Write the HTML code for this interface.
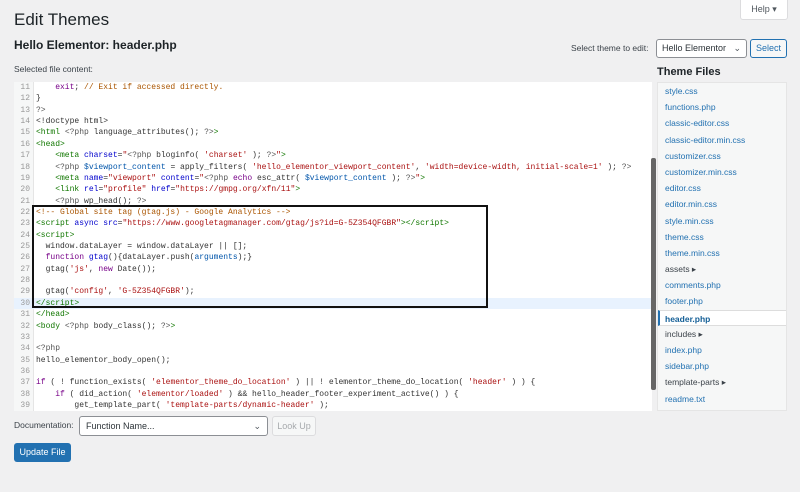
<!DOCTYPE html>
<html><head><meta charset="utf-8"><style>
*{margin:0;padding:0;box-sizing:border-box}
body{width:800px;height:492px;background:#f0f0f1;font-family:"Liberation Sans",sans-serif;color:#1d2327;position:relative;overflow:hidden}
.abs{position:absolute}
h1{position:absolute;left:14px;top:10px;font-size:17px;font-weight:400;color:#1d2327}
h2{position:absolute;left:14px;top:38px;font-size:12px;font-weight:700}
.sel{left:14px;top:64px;font-size:8.5px;color:#3c434a}
.help{left:740px;top:-2px;width:48px;height:22px;background:#fff;border:1px solid #dcdcde;border-radius:0 0 3px 3px;font-size:9px;color:#50575e;text-align:center;line-height:20px}
.editor{left:14px;top:82px;width:638px;height:329px;background:#fff;overflow:hidden}
.gut{position:absolute;left:0;top:0;width:20px;height:100%;background:#f6f7f7;border-right:1px solid #e5e5e5}
.code{position:absolute;left:0;top:0;font-family:"Liberation Mono",monospace;font-size:8px;line-height:11.36px;white-space:pre;color:#333}
.ln{display:inline-block;width:20px;text-align:right;padding-right:4px;color:#999;margin-right:2px}
.t{color:#170}.a{color:#00c}.s{color:#a11}.k{color:#708}.c{color:#a50}.v{color:#05a}.m{color:#555}
.hl{background:#e8f2fe;display:block;width:638px}
.box{left:32px;top:205px;width:456px;height:103px;border:2px solid #111}
.sb{left:651px;top:158px;width:5px;height:232px;background:#666;border-radius:2px}
.files{left:657px;top:82px;width:130px;height:329px;background:#f6f7f7;border:1px solid #e5e5e5;font-size:8.5px}
.files div{height:16.2px;line-height:16.2px;padding-left:7px;color:#2271b1}
.files div.d{color:#3c434a}
.files div.cur{background:#fff;border-left:2px solid #2271b1;border-top:1px solid #ddd;border-bottom:1px solid #ddd;font-weight:700;color:#135e96;padding-left:5px;width:128px}
</style></head><body>
<h1>Edit Themes</h1>
<h2>Hello Elementor: header.php</h2>
<div class="abs sel">Selected file content:</div>
<div class="abs help">Help ▾</div>
<div class="abs" style="left:571px;top:43px;font-size:8.5px;color:#3c434a">Select theme to edit:</div>
<div class="abs" style="left:656px;top:39px;width:91px;height:19px;background:#fff;border:1px solid #8c8f94;border-radius:3px;font-size:9px;line-height:17px;padding-left:5px;color:#2c3338">Hello Elementor <span style="position:absolute;right:5px;color:#50575e">⌄</span></div>
<div class="abs" style="left:750px;top:39px;width:37px;height:19px;border:1px solid #2271b1;border-radius:3px;background:#f6f7f7;font-size:9px;line-height:17px;text-align:center;color:#2271b1">Select</div>
<div class="abs" style="left:657px;top:66px;font-size:11px;font-weight:700;color:#1d2327">Theme Files</div>
<div class="abs editor"><div class="gut"></div><div class="code"><span class="ln">11</span>    <span class="k">exit</span>; <span class="c">// Exit if accessed directly.</span>
<span class="ln">12</span>}
<span class="ln">13</span><span class="m">?&gt;</span>
<span class="ln">14</span>&lt;!doctype html&gt;
<span class="ln">15</span><span class="t">&lt;html</span> <span class="m">&lt;?php</span> language_attributes(); <span class="m">?&gt;</span><span class="t">&gt;</span>
<span class="ln">16</span><span class="t">&lt;head&gt;</span>
<span class="ln">17</span>    <span class="t">&lt;meta</span> <span class="a">charset</span>=<span class="s">"</span><span class="m">&lt;?php</span> bloginfo( <span class="s">'charset'</span> ); <span class="m">?&gt;</span><span class="s">"</span><span class="t">&gt;</span>
<span class="ln">18</span>    <span class="m">&lt;?php</span> <span class="v">$viewport_content</span> = apply_filters( <span class="s">'hello_elementor_viewport_content'</span>, <span class="s">'width=device-width, initial-scale=1'</span> ); <span class="m">?&gt;</span>
<span class="ln">19</span>    <span class="t">&lt;meta</span> <span class="a">name</span>=<span class="s">"viewport"</span> <span class="a">content</span>=<span class="s">"</span><span class="m">&lt;?php</span> <span class="k">echo</span> esc_attr( <span class="v">$viewport_content</span> ); <span class="m">?&gt;</span><span class="s">"</span><span class="t">&gt;</span>
<span class="ln">20</span>    <span class="t">&lt;link</span> <span class="a">rel</span>=<span class="s">"profile"</span> <span class="a">href</span>=<span class="s">"https://gmpg.org/xfn/11"</span><span class="t">&gt;</span>
<span class="ln">21</span>    <span class="m">&lt;?php</span> wp_head(); <span class="m">?&gt;</span>
<span class="ln">22</span><span class="c">&lt;!-- Global site tag (gtag.js) - Google Analytics --&gt;</span>
<span class="ln">23</span><span class="t">&lt;script</span> <span class="a">async</span> <span class="a">src</span>=<span class="s">"https://www.googletagmanager.com/gtag/js?id=G-5Z354QFGBR"</span><span class="t">&gt;&lt;/script&gt;</span>
<span class="ln">24</span><span class="t">&lt;script&gt;</span>
<span class="ln">25</span>  window.dataLayer = window.dataLayer || [];
<span class="ln">26</span>  <span class="k">function</span> <span class="a">gtag</span>(){dataLayer.push(<span class="v">arguments</span>);}
<span class="ln">27</span>  gtag(<span class="s">'js'</span>, <span class="k">new</span> Date());
<span class="ln">28</span>
<span class="ln">29</span>  gtag(<span class="s">'config'</span>, <span class="s">'G-5Z354QFGBR'</span>);
<span class="hl"><span class="ln">30</span><span class="t">&lt;/script&gt;</span></span><span class="ln">31</span><span class="t">&lt;/head&gt;</span>
<span class="ln">32</span><span class="t">&lt;body</span> <span class="m">&lt;?php</span> body_class(); <span class="m">?&gt;</span><span class="t">&gt;</span>
<span class="ln">33</span>
<span class="ln">34</span><span class="m">&lt;?php</span>
<span class="ln">35</span>hello_elementor_body_open();
<span class="ln">36</span>
<span class="ln">37</span><span class="k">if</span> ( ! function_exists( <span class="s">'elementor_theme_do_location'</span> ) || ! elementor_theme_do_location( <span class="s">'header'</span> ) ) {
<span class="ln">38</span>    <span class="k">if</span> ( did_action( <span class="s">'elementor/loaded'</span> ) &amp;&amp; hello_header_footer_experiment_active() ) {
<span class="ln">39</span>        get_template_part( <span class="s">'template-parts/dynamic-header'</span> );
</div></div>
<div class="abs box"></div>
<div class="abs sb"></div>
<div class="abs files">
<div>style.css</div><div>functions.php</div><div>classic-editor.css</div><div>classic-editor.min.css</div><div>customizer.css</div><div>customizer.min.css</div><div>editor.css</div><div>editor.min.css</div><div>style.min.css</div><div>theme.css</div><div>theme.min.css</div><div class="d">assets ▸</div><div>comments.php</div><div>footer.php</div><div class="cur">header.php</div><div class="d">includes ▸</div><div>index.php</div><div>sidebar.php</div><div class="d">template-parts ▸</div><div>readme.txt</div>
</div>
<div class="abs" style="left:14px;top:420px;font-size:8.5px;color:#3c434a">Documentation:</div>
<div class="abs" style="left:79px;top:416px;width:189px;height:20px;background:#fff;border:1px solid #8c8f94;border-radius:3px;font-size:9px;line-height:18px;padding-left:6px;color:#2c3338">Function Name... <span style="position:absolute;right:6px;color:#50575e">⌄</span></div>
<div class="abs" style="left:272px;top:416px;width:44px;height:20px;border:1px solid #dcdcde;border-radius:3px;background:#f6f7f7;font-size:9px;line-height:18px;text-align:center;color:#a7aaad">Look Up</div>
<div class="abs" style="left:14px;top:443px;width:57px;height:19px;background:#2271b1;border-radius:3px;font-size:9px;line-height:19px;text-align:center;color:#fff">Update File</div>
</body></html>
